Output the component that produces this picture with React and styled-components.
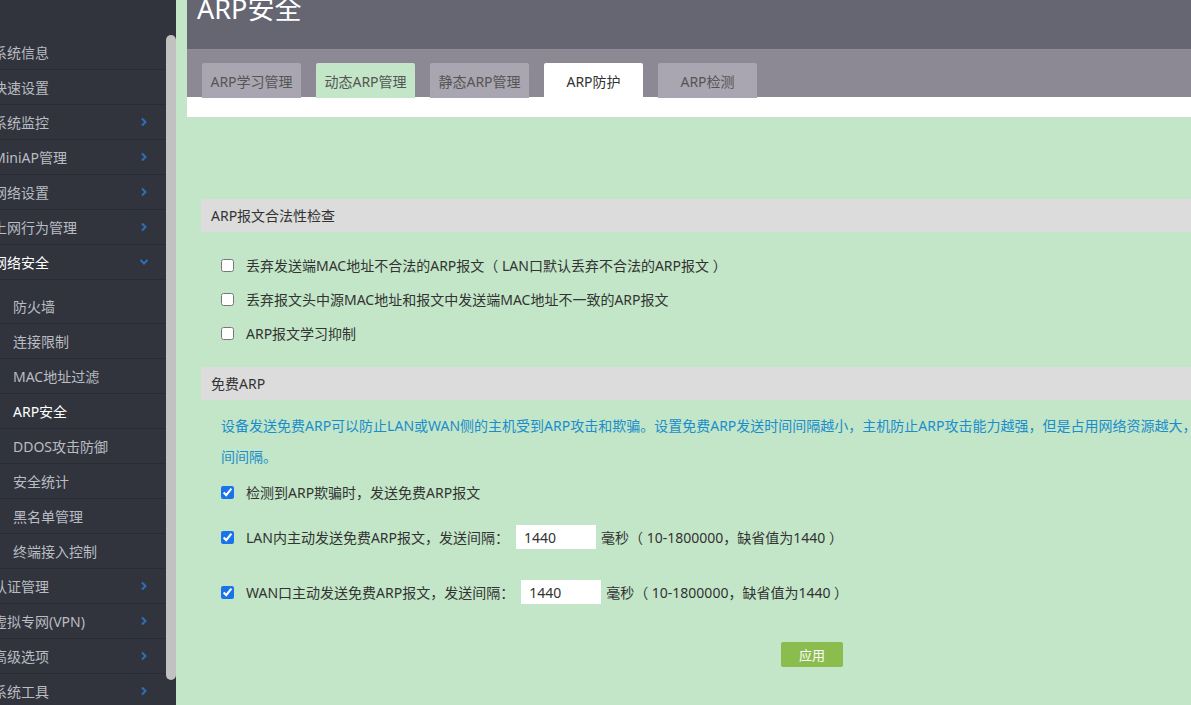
import React from "react";
import styled, { createGlobalStyle } from "styled-components";

const GlobalStyle = createGlobalStyle`
  html, body {
    margin: 0;
    padding: 0;
    overflow: hidden;
    background: #c2e6c7;
    font-family: "Noto Sans", "Noto Sans CJK SC", sans-serif;
  }
`;

const menu = [
  { label: "系统信息" },
  { label: "快速设置" },
  { label: "系统监控", arrow: true },
  { label: "MiniAP管理", arrow: true },
  { label: "网络设置", arrow: true },
  { label: "上网行为管理", arrow: true },
  {
    label: "网络安全",
    active: true,
    children: [
      "防火墙",
      "连接限制",
      "MAC地址过滤",
      "ARP安全",
      "DDOS攻击防御",
      "安全统计",
      "黑名单管理",
      "终端接入控制",
    ],
  },
  { label: "认证管理", arrow: true },
  { label: "虚拟专网(VPN)", arrow: true },
  { label: "高级选项", arrow: true },
  { label: "系统工具", arrow: true },
];

const tabs = [
  { label: "ARP学习管理", kind: "gray" },
  { label: "动态ARP管理", kind: "green" },
  { label: "静态ARP管理", kind: "gray" },
  { label: "ARP防护", kind: "white" },
  { label: "ARP检测", kind: "gray" },
];

function Chevron({ down }) {
  return (
    <svg width="10" height="10" viewBox="0 0 10 10">
      <polyline
        points={down ? "1.5,3 5,6.5 8.5,3" : "3,1.5 6.5,5 3,8.5"}
        fill="none"
        stroke="#2e6fba"
        strokeWidth="2"
      />
    </svg>
  );
}

export default function App() {
  return (
    <Page>
      <GlobalStyle />
      <Sidebar>
        <Nav>
          {menu.map((m) => (
            <React.Fragment key={m.label}>
              <NavItem $active={m.active}>
                <span>{m.label}</span>
                {m.arrow && <Chevron />}
                {m.children && <Chevron down />}
              </NavItem>
              {m.children && (
                <SubMenu>
                  {m.children.map((c) => (
                    <NavItem key={c} $sub $active={c === "ARP安全"}>
                      <span>{c}</span>
                    </NavItem>
                  ))}
                </SubMenu>
              )}
            </React.Fragment>
          ))}
        </Nav>
        <Track>
          <Thumb />
        </Track>
      </Sidebar>
      <Main>
        <Header>
          <Title>ARP安全</Title>
        </Header>
        <TabBar>
          {tabs.map((t) => (
            <Tab key={t.label} $kind={t.kind}>
              {t.label}
            </Tab>
          ))}
        </TabBar>
        <WhiteStrip />
        <Content>
          <SectionHead>ARP报文合法性检查</SectionHead>
          <CheckList>
            <Row>
              <Box type="checkbox" />
              <Label>丢弃发送端MAC地址不合法的ARP报文（ LAN口默认丢弃不合法的ARP报文 ）</Label>
            </Row>
            <Row>
              <Box type="checkbox" />
              <Label>丢弃报文头中源MAC地址和报文中发送端MAC地址不一致的ARP报文</Label>
            </Row>
            <Row>
              <Box type="checkbox" />
              <Label>ARP报文学习抑制</Label>
            </Row>
          </CheckList>
          <SectionHead>免费ARP</SectionHead>
          <Note>
            <span>设备发送免费ARP可以防止LAN或WAN侧的主机受到ARP攻击和欺骗。设置免费ARP发送时间间隔越小，主机防止ARP攻击能力越强，但是占用网络资源越大，请合理设置时</span>
            <span>间间隔。</span>
          </Note>
          <Row>
            <Box type="checkbox" defaultChecked />
            <Label>检测到ARP欺骗时，发送免费ARP报文</Label>
          </Row>
          <Row $top={11}>
            <Box type="checkbox" defaultChecked />
            <Label>LAN内主动发送免费ARP报文，发送间隔：</Label>
            <Field defaultValue="1440" />
            <Label>毫秒（ 10-1800000，缺省值为1440 ）</Label>
          </Row>
          <Row $top={21}>
            <Box type="checkbox" defaultChecked />
            <Label>WAN口主动发送免费ARP报文，发送间隔：</Label>
            <Field defaultValue="1440" />
            <Label>毫秒（ 10-1800000，缺省值为1440 ）</Label>
          </Row>
          <Actions>
            <ApplyButton>应用</ApplyButton>
          </Actions>
        </Content>
      </Main>
    </Page>
  );
}

const Page = styled.div`
  display: flex;
  height: 705px;
  overflow: hidden;
`;

const Sidebar = styled.div`
  flex: 0 0 176px;
  display: flex;
  background: #31343c;
  height: 705px;
  overflow: hidden;
`;

const Nav = styled.div`
  width: 166px;
  padding-top: 35px;
  overflow: hidden;
`;

const SubMenu = styled.div`
  padding-top: 9px;
`;

const NavItem = styled.div`
  display: flex;
  align-items: center;
  justify-content: space-between;
  height: 34px;
  border-bottom: 1px solid #2a2c33;
  padding-left: ${(p) => (p.$sub ? "13px" : "0")};
  padding-right: 17px;
  margin-left: ${(p) => (p.$sub ? "0" : "-7px")};
  font-size: 14px;
  color: ${(p) => (p.$active ? "#ffffff" : "#b9bcc3")};
  white-space: nowrap;
  svg {
    flex: 0 0 auto;
  }
`;

const Track = styled.div`
  width: 10px;
  display: flex;
  flex-direction: column;
  padding: 35px 0 25px;
`;

const Thumb = styled.div`
  flex: 1;
  background: #c1c1c1;
  border-radius: 5px;
`;

const Main = styled.div`
  margin-left: 11px;
  flex: 1;
  min-width: 0;
  overflow: hidden;
`;

const Header = styled.div`
  height: 49px;
  background: #666673;
  padding-left: 10px;
  overflow: hidden;
`;

const Title = styled.div`
  margin-top: -9px;
  font-size: 27px;
  line-height: 36px;
  color: #ffffff;
`;

const TabBar = styled.div`
  display: flex;
  gap: 15px;
  height: 48px;
  box-sizing: border-box;
  padding: 13px 0 0 15px;
  background: #8c8995;
  border-top: 1px solid #918e9a;
`;

const tabColors = {
  gray: "#a9a6b1",
  green: "#c2e6c7",
  white: "#ffffff",
};

const Tab = styled.div`
  width: 99px;
  height: 35px;
  display: flex;
  align-items: center;
  justify-content: center;
  border-radius: 2px 2px 0 0;
  background: ${(p) => tabColors[p.$kind]};
  color: ${(p) => (p.$kind === "white" ? "#333" : "#555")};
  font-size: 14px;
  white-space: nowrap;
`;

const WhiteStrip = styled.div`
  height: 20px;
  background: #ffffff;
`;

const Content = styled.div`
  padding: 82px 0 0 14px;
`;

const SectionHead = styled.div`
  height: 33px;
  line-height: 33px;
  padding-left: 10px;
  background: #dcdcdc;
  color: #333;
  font-size: 14px;
`;

const CheckList = styled.div`
  padding: 16px 0 17px;
`;

const Row = styled.div`
  display: flex;
  align-items: center;
  height: 34px;
  margin-top: ${(p) => (p.$top ? `${p.$top}px` : "0")};
  padding-left: 20px;
`;

const Box = styled.input`
  width: 13px;
  height: 13px;
  margin: 0 12px 0 0;
  accent-color: #1a73e8;
`;

const Label = styled.span`
  font-size: 14px;
  color: #333;
  white-space: nowrap;
`;

const Field = styled.input`
  width: 80px;
  height: 24px;
  box-sizing: border-box;
  margin: 0 5px 0 7px;
  padding: 0 8px;
  border: none;
  background: #fff;
  font-family: "Noto Sans", sans-serif;
  font-size: 14px;
  color: #333;
  outline: none;
`;

const Note = styled.div`
  display: flex;
  flex-direction: column;
  padding: 10px 0 3px 20px;
  color: #1b8dcc;
  font-size: 14px;
  line-height: 31px;
  white-space: nowrap;
`;

const Actions = styled.div`
  padding: 33px 0 0 580px;
`;

const ApplyButton = styled.button`
  width: 62px;
  height: 25px;
  border: none;
  border-radius: 2px;
  background: #8abd4e;
  color: #fff;
  font-family: "Noto Sans", "Noto Sans CJK SC", sans-serif;
  font-size: 13px;
  padding: 0;
`;
